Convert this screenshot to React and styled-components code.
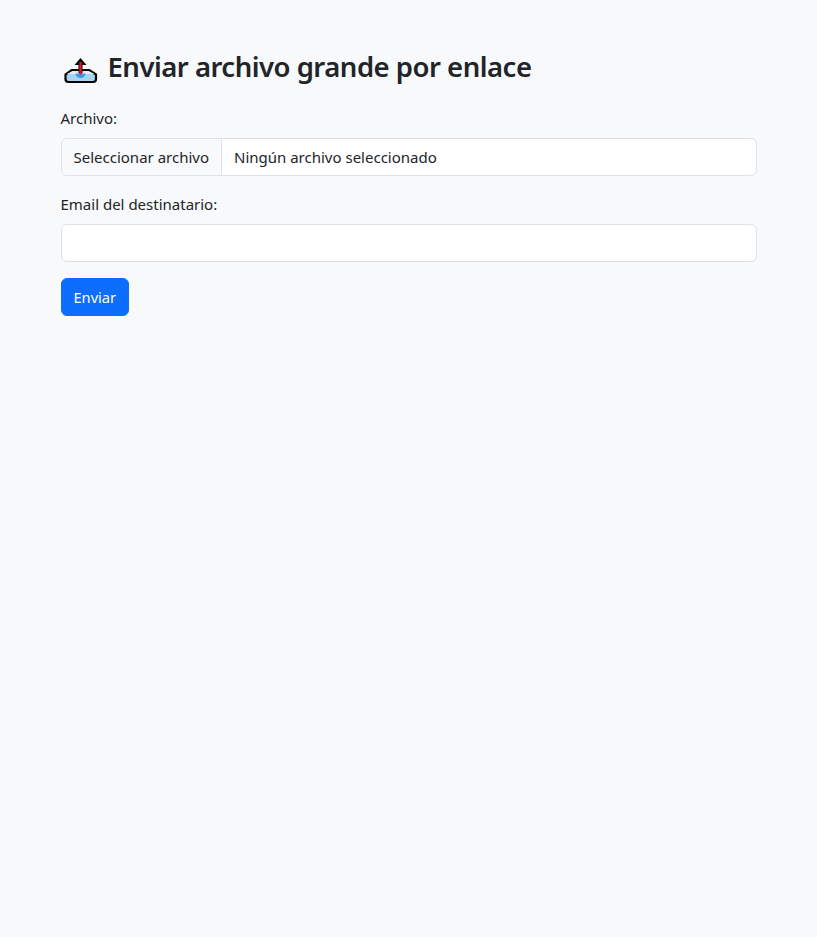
import React from "react";
import styled, { createGlobalStyle } from "styled-components";

const Global = createGlobalStyle`
  * { box-sizing: border-box; }
  html, body { margin: 0; padding: 0; }
  body {
    background: #f8f9fa;
    color: #212529;
    font-family: "Noto Sans", "Open Sans", sans-serif;
    font-size: 16px;
    line-height: 24px;
    min-height: 937px;
  }
`;

const Container = styled.main`
  width: 720px;
  margin: 0 auto;
  padding: 48px 12px 0;
`;

const Title = styled.h2`
  display: flex;
  align-items: center;
  gap: 9px;
  height: 38.4px;
  margin: 0 0 19.6px;
  font-size: 27.5px;
  font-weight: 600;
  letter-spacing: -0.5px;
  line-height: 38.4px;
  white-space: nowrap;
`;

const Field = styled.div`
  margin-bottom: 16px;
`;

const Label = styled.label`
  display: block;
  margin-bottom: 8px;
  font-size: 15px;
`;

const FileBox = styled.div`
  display: flex;
  align-items: stretch;
  height: 38px;
  background: #fff;
  border: 1px solid #dee2e6;
  border-radius: 6px;
  overflow: hidden;
  font-size: 15px;
  line-height: 36px;
`;

const FileButton = styled.span`
  padding: 0 12px;
  background: #f8f9fa;
  border-right: 1px solid #dee2e6;
`;

const FileName = styled.span`
  padding: 0 12px;
`;

const TextInput = styled.input`
  display: block;
  width: 100%;
  height: 38px;
  padding: 6px 12px;
  background: #fff;
  border: 1px solid #dee2e6;
  border-radius: 6px;
  font: inherit;
  color: inherit;
  outline: none;
`;

const Submit = styled.button`
  display: block;
  height: 38px;
  padding: 0 12px;
  background: #0d6efd;
  border: 1px solid #0d6efd;
  border-radius: 6px;
  color: #fff;
  font-family: inherit;
  font-size: 14.6px;
  line-height: 24px;
`;

const UploadIcon = () => (
  <svg width="38" height="34" viewBox="0 0 38 34" aria-hidden="true">
    <path d="M4.5 24.5 L11 20 H28 L35 24.5 V29 Q35 32 32 32 H7.5 Q4.5 32 4.5 29 Z" fill="#a5d5f3" stroke="#000" strokeWidth="2.2" strokeLinejoin="round" />
    <path d="M6 24 L11.5 21 H27.5 L33.5 24 Z" fill="#e6edf2" />
    <path d="M14.5 23.5 A5 4.5 0 0 0 24.5 23.5 Z" fill="#3f9be0" />
    <path d="M19.5 8 L25.5 15 H21.5 V23 H17.5 V15 H13.5 Z" fill="#000" />
    <path d="M19.5 12 V24.5" stroke="#e0142c" strokeWidth="2.4" />
  </svg>
);

export default function App() {
  return (
    <>
      <Global />
      <Container>
        <Title>
          <UploadIcon />
          Enviar archivo grande por enlace
        </Title>
        <Field>
          <Label>Archivo:</Label>
          <FileBox>
            <FileButton>Seleccionar archivo</FileButton>
            <FileName>Ningún archivo seleccionado</FileName>
          </FileBox>
        </Field>
        <Field>
          <Label htmlFor="email">Email del destinatario:</Label>
          <TextInput id="email" type="email" />
        </Field>
        <Submit type="button">Enviar</Submit>
      </Container>
    </>
  );
}
